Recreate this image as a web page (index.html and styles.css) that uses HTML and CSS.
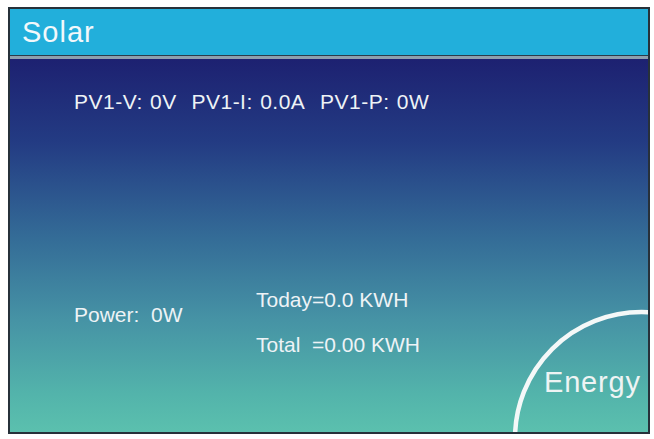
FILE: index.html
```html
<!DOCTYPE html>
<html>
<head>
<meta charset="utf-8">
<link rel="stylesheet" href="styles.css">
</head>
<body>
<div class="frame">
  <div class="header"><span class="title">Solar</span></div>
  <div class="content">
    <div class="pv-row">PV1-V: 0V&nbsp; PV1-I: 0.0A&nbsp; PV1-P: 0W</div>
    <div class="stats">
      <div class="power">Power:&nbsp; 0W</div>
      <div class="energy-list">
        <div class="energy-item">Today=0.0 KWH</div>
        <div class="energy-item">Total&nbsp; =0.00 KWH</div>
      </div>
    </div>
    <div class="energy-btn">
      <svg class="arc" width="140" height="130" viewBox="0 0 140 130">
        <circle cx="133.5" cy="136.5" r="126.5" fill="none" stroke="#f4f8f8" stroke-width="4.5"/>
      </svg>
      <span class="energy-label">Energy</span>
    </div>
  </div>
</div>
</body>
</html>
```
FILE: styles.css
```css
html, body {
  margin: 0;
  padding: 0;
  background: #ffffff;
}
body {
  width: 654px;
  height: 439px;
  overflow: hidden;
  font-family: "Liberation Sans", Arial, sans-serif;
}
.frame {
  margin: 7px 0 0 8px;
  width: 642px;
  height: 427px;
  box-sizing: border-box;
  border: 2px solid #27313a;
  display: flex;
  flex-direction: column;
  overflow: hidden;
}
.header {
  height: 47px;
  flex: none;
  box-sizing: border-box;
  background: #22afdb;
  border-bottom: 1px solid #2b3b4a;
  display: flex;
  align-items: center;
  padding-left: 12px;
}
.title {
  color: #f2f8fb;
  font-size: 29px;
  line-height: 29px;
  letter-spacing: 1px;
  margin-top: 1px;
}
.content {
  flex: 1;
  position: relative;
  border-top: 3px solid #8d9fae;
  background: linear-gradient(180deg, #1d2171 0%, #233b83 22%, #346c97 48%, #4693a5 70%, #53b4ab 90%, #5bc0ae 100%);
  color: #eef3f6;
  padding: 32px 0 0 64px;
}
.pv-row {
  font-size: 21px;
  line-height: 21px;
  letter-spacing: 0.5px;
  word-spacing: 1px;
  white-space: nowrap;
}
.stats {
  display: grid;
  grid-template-columns: 182px auto;
  margin-top: 177px;
}
.power {
  font-size: 21px;
  line-height: 21px;
  margin-top: 15px;
  white-space: nowrap;
}
.energy-list {
  display: flex;
  flex-direction: column;
  gap: 24px;
}
.energy-item {
  font-size: 21px;
  line-height: 21px;
  white-space: nowrap;
}
.energy-btn {
  position: absolute;
  right: 0;
  bottom: 0;
  width: 140px;
  height: 130px;
}
.arc {
  position: absolute;
  left: 0;
  top: 0;
}
.energy-label {
  position: absolute;
  left: 36px;
  top: 66px;
  font-size: 29px;
  line-height: 28px;
  letter-spacing: 0.8px;
  color: #eef4f4;
}
```
